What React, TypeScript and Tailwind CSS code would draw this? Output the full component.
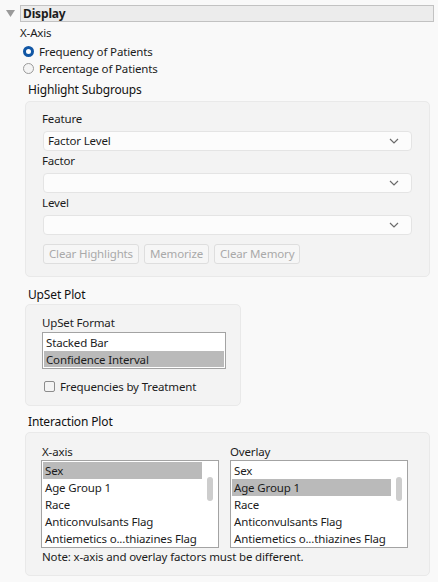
import React from 'react'

const xAxisItems = ['Sex', 'Age Group 1', 'Race', 'Anticonvulsants Flag', 'Antiemetics o...thiazines Flag']

function Chevron() {
  return (
    <svg width="10" height="6" viewBox="0 0 10 6" className="mr-[12px] shrink-0">
      <polyline points="1,1 5,5 9,1" fill="none" stroke="#6b6b6b" strokeWidth="1.2" />
    </svg>
  )
}

function Select({ value }: { value?: string }) {
  return (
    <div className="ml-[1px] w-[369px] h-[20px] flex items-center justify-between rounded-[4px] border border-[#e4e4e4] bg-[#fcfcfc]">
      <span className="pl-[4px] leading-[16px]">{value ?? ''}</span>
      <Chevron />
    </div>
  )
}

function Radio({ checked, label }: { checked?: boolean; label: string }) {
  return (
    <div className="h-[17px] flex items-center">
      <span
        className={
          checked
            ? 'ml-[3px] shrink-0 w-[11px] h-[11px] rounded-full border-[3px] border-[#1257a5] bg-white'
            : 'ml-[3px] shrink-0 w-[11px] h-[11px] rounded-full border border-[#9a9a9a] bg-[#f4f4f4]'
        }
      />
      <span className="ml-[5px] leading-[16px]">{label}</span>
    </div>
  )
}

function ListBox({ items, selected, width, height, scroll }: { items: string[]; selected: number; width: string; height: string; scroll?: boolean }) {
  return (
    <div className={`${width} ${height} border border-[#a3a3a3] bg-white p-[1px] flex overflow-hidden`}>
      <div className="flex-1 min-w-0 flex flex-col overflow-hidden">
        {items.map((it, i) => (
          <div key={it} className={`h-[17px] shrink-0 px-[2px] leading-[17px] whitespace-nowrap overflow-hidden ${i === selected ? 'bg-[#bababa]' : ''}`}>
            {it}
          </div>
        ))}
      </div>
      {scroll && (
        <div className="w-[15px] shrink-0 flex justify-center pt-[15px]">
          <div className="w-[6px] h-[24px] rounded-full bg-[#cdcdcd]" />
        </div>
      )}
    </div>
  )
}

function DisabledButton({ label }: { label: string }) {
  return (
    <div className="h-[20px] px-[5px] flex items-center rounded-[3px] border border-[#dedede] bg-[#f6f6f6] text-[#a9a9a9] leading-[16px]">
      {label}
    </div>
  )
}

export default function App() {
  return (
    <div className="w-[438px] h-[582px] overflow-hidden bg-[#f9f9f9] text-[11.5px] tracking-[-0.15px] text-[#1c1c1c] font-['Noto_Sans',sans-serif]">
      {/* header */}
      <div className="flex pt-[5px]">
        <div className="w-[20px] shrink-0 pt-[5px] pl-[6px]">
          <svg width="9" height="7" viewBox="0 0 9 7">
            <polygon points="0,0 9,0 4.5,7" fill="#9a9a9a" />
          </svg>
        </div>
        <div className="w-[414px] h-[17px] border border-[#c2c2c2] bg-[#ececec] flex items-center pl-[2px] font-bold text-[12px] leading-[15px]">
          Display
        </div>
      </div>

      <div className="pl-[20px]">
        <div className="mt-[3px] leading-[16px]">X-Axis</div>
        <div className="mt-[2px]">
          <Radio checked label="Frequency of Patients" />
          <Radio label="Percentage of Patients" />
        </div>

        {/* Highlight Subgroups */}
        <div className="mt-[5px] ml-[8px] leading-[16px] text-[12px] text-[#111]">Highlight Subgroups</div>
        <div className="mt-[3px] ml-[5px] w-[405px] rounded-[5px] border border-[#e9e9e9] bg-[#f3f3f3] pt-[9px] pb-[12px] pl-[16px]">
          <div className="leading-[16px]">Feature</div>
          <div className="mt-[4px]"><Select value="Factor Level" /></div>
          <div className="mt-[2px] leading-[16px]">Factor</div>
          <div className="mt-[4px]"><Select /></div>
          <div className="mt-[2px] leading-[16px]">Level</div>
          <div className="mt-[4px]"><Select /></div>
          <div className="mt-[9px] ml-[1px] flex gap-[5px]">
            <DisabledButton label="Clear Highlights" />
            <DisabledButton label="Memorize" />
            <DisabledButton label="Clear Memory" />
          </div>
        </div>

        {/* UpSet Plot */}
        <div className="mt-[10px] ml-[8px] leading-[16px] text-[12px] text-[#111]">UpSet Plot</div>
        <div className="mt-[1px] ml-[5px] w-[216px] rounded-[5px] border border-[#e9e9e9] bg-[#f3f3f3] pt-[10px] pb-[10px] pl-[16px]">
          <div className="leading-[16px]">UpSet Format</div>
          <div className="mt-[1px]">
            <ListBox items={['Stacked Bar', 'Confidence Interval']} selected={1} width="w-[184px]" height="h-[37px]" />
          </div>
          <div className="mt-[9px] h-[17px] flex items-center">
            <span className="ml-[2px] shrink-0 w-[11px] h-[11px] rounded-[2px] border border-[#8c8c8c] bg-[#f4f4f4]" />
            <span className="ml-[5px] leading-[16px]">Frequencies by Treatment</span>
          </div>
        </div>

        {/* Interaction Plot */}
        <div className="mt-[8px] ml-[8px] leading-[16px] text-[12px] text-[#111]">Interaction Plot</div>
        <div className="mt-[2px] ml-[5px] w-[405px] rounded-[5px] border border-[#e9e9e9] bg-[#f3f3f3] pt-[11px] pb-[10px] pl-[15px]">
          <div className="flex gap-[11px]">
            <div>
              <div className="leading-[16px] pl-[1px]">X-axis</div>
              <ListBox items={xAxisItems} selected={0} width="w-[178px]" height="h-[88px]" scroll />
            </div>
            <div>
              <div className="leading-[16px]">Overlay</div>
              <ListBox items={xAxisItems} selected={1} width="w-[178px]" height="h-[88px]" scroll />
            </div>
          </div>
          <div className="mt-[1px] pl-[1px] leading-[16px]">Note: x-axis and overlay factors must be different.</div>
        </div>
      </div>
    </div>
  )
}
